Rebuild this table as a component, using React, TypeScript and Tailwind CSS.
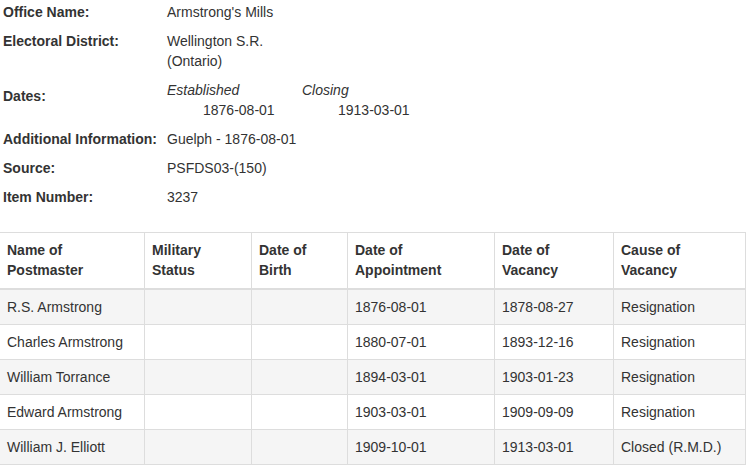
import React from "react";

const rows = [
  ["R.S. Armstrong", "", "", "1876-08-01", "1878-08-27", "Resignation"],
  ["Charles Armstrong", "", "", "1880-07-01", "1893-12-16", "Resignation"],
  ["William Torrance", "", "", "1894-03-01", "1903-01-23", "Resignation"],
  ["Edward Armstrong", "", "", "1903-03-01", "1909-09-09", "Resignation"],
  ["William J. Elliott", "", "", "1909-10-01", "1913-03-01", "Closed (R.M.D.)"],
];

const headers = [
  ["Name of", "Postmaster"],
  ["Military", "Status"],
  ["Date of", "Birth"],
  ["Date of", "Appointment"],
  ["Date of", "Vacancy"],
  ["Cause of", "Vacancy"],
];

const widths = ["w-[145px]", "w-[107px]", "w-[96px]", "w-[147px]", "w-[119px]", "w-[132px]"];

function Label({ children, className = "" }: { children: React.ReactNode; className?: string }) {
  return <div className={"w-[164px] shrink-0 font-bold " + className}>{children}</div>;
}

export default function App() {
  return (
    <div
      className="w-[750px] h-[471px] overflow-hidden bg-white text-[14px] leading-[20px] text-[#333]"
      style={{ fontFamily: '"Liberation Sans", Arial, sans-serif' }}
    >
      <div className="flex flex-col gap-[9px] pt-[2px] pl-[3px]">
        <div className="flex">
          <Label>Office Name:</Label>
          <div>Armstrong's Mills</div>
        </div>
        <div className="flex">
          <Label>Electoral District:</Label>
          <div>
            <div>Wellington S.R.</div>
            <div>(Ontario)</div>
          </div>
        </div>
        <div className="flex">
          <Label className="pt-[6px]">Dates:</Label>
          <div className="flex">
            <div className="w-[135px]">
              <div className="italic">Established</div>
              <div className="pl-[36px]">1876-08-01</div>
            </div>
            <div className="w-[135px]">
              <div className="italic">Closing</div>
              <div className="pl-[36px]">1913-03-01</div>
            </div>
          </div>
        </div>
        <div className="flex">
          <Label>Additional Information:</Label>
          <div>Guelph - 1876-08-01</div>
        </div>
        <div className="flex">
          <Label>Source:</Label>
          <div>PSFDS03-(150)</div>
        </div>
        <div className="flex">
          <Label>Item Number:</Label>
          <div>3237</div>
        </div>
      </div>

      <table className="mt-[25px] ml-[-1px] border-collapse border border-[#ddd] table-fixed w-[747px]">
        <thead>
          <tr>
            {headers.map((h, i) => (
              <th
                key={i}
                className={
                  widths[i] +
                  " border border-[#ddd] border-b-2 text-left align-bottom font-bold pl-[7px] pr-[8px] pt-[7px] pb-[8px]"
                }
              >
                <div>{h[0]}</div>
                <div>{h[1]}</div>
              </th>
            ))}
          </tr>
        </thead>
        <tbody>
          {rows.map((r, ri) => (
            <tr key={ri} className={ri % 2 === 0 ? "bg-[#f5f5f5]" : "bg-white"}>
              {r.map((c, ci) => (
                <td key={ci} className="border border-[#ddd] pl-[7px] pr-[8px] h-[35px] py-0 align-middle">
                  {c}
                </td>
              ))}
            </tr>
          ))}
        </tbody>
      </table>
    </div>
  );
}
